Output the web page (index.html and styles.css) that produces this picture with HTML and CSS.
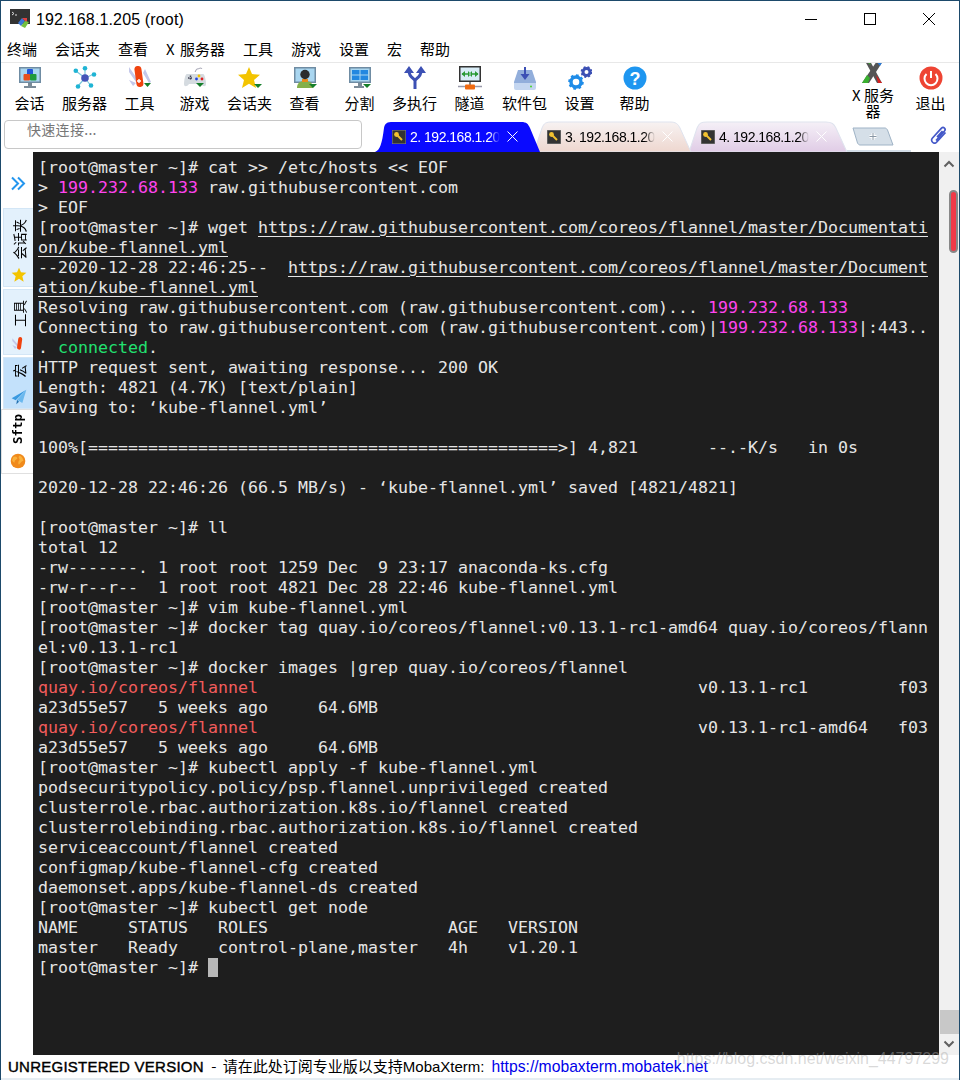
FILE: index.html
```html
<!DOCTYPE html>
<html lang="zh">
<head>
<meta charset="utf-8">
<title>192.168.1.205 (root)</title>
<link rel="stylesheet" href="styles.css">
</head>
<body>
<div class="window">
  <header class="titlebar">
    <svg class="app-icon" viewBox="0 0 20 20"><rect x="0" y="0" width="20" height="15" fill="#333"/><path d="M2 3l2 1.500-2 1.500" stroke="#ddd" fill="none"/><path d="M5 6h2" stroke="#ddd"/><path d="M8 14l4-5 3 3-4 5z" fill="#3a78d8"/><path d="M12 9l5 0 0 4-2-1z" fill="#e04040"/><path d="M11 17l4-5 4 1-4 6z" fill="#74c040"/></svg>
    <span class="title">192.168.1.205 (root)</span>
    <div class="win-controls">
      <svg class="win-btn" viewBox="0 0 12 12"><path d="M0 6.500h12" stroke="#000"/></svg>
      <svg class="win-btn" viewBox="0 0 12 12"><rect x=".5" y=".5" width="11" height="11" fill="none" stroke="#000"/></svg>
      <svg class="win-btn" viewBox="0 0 12 12"><path d="M0 0l12 12M12 0L0 12" stroke="#000"/></svg>
    </div>
  </header>
  <nav class="menubar">
    <span>终端</span><span>会话夹</span><span>查看</span><span>X 服务器</span><span>工具</span><span>游戏</span><span>设置</span><span>宏</span><span>帮助</span>
  </nav>
  <div class="toolbar">
    <div class="tool"><svg class="icon" viewBox="0 0 24 24"><rect x="1" y="1" width="22" height="16" fill="#6f8ca3"/><rect x="2.500" y="2.500" width="19" height="13" fill="#a9d6f0"/><rect x="9" y="3" width="6" height="6" rx="1" fill="#2255d8"/><rect x="5.500" y="8" width="6.500" height="6.500" rx="1" fill="#e8501c"/><rect x="12" y="8" width="6.500" height="6.500" rx="1" fill="#1e9a3c"/><path d="M10 17h4v3h-4zM6 20h12v2H6z" fill="#7b8b98"/></svg><span>会话</span></div>
    <div class="tool"><svg class="icon" viewBox="0 0 24 24"><path d="M12 12L3 5M12 12L12 3M12 12L21 8M12 12L18 20M12 12L5 20" stroke="#7fc8dc" stroke-width="1.200"/><circle cx="12" cy="12" r="3.800" fill="#4454b8"/><circle cx="2.800" cy="4.800" r="2.300" fill="#1fb4d4"/><circle cx="12" cy="2.300" r="2.300" fill="#1fb4d4"/><circle cx="21" cy="8.500" r="2.300" fill="#1fb4d4"/><circle cx="18" cy="19.500" r="2.300" fill="#1fb4d4"/><circle cx="5" cy="20.500" r="2.300" fill="#1fb4d4"/></svg><span>服务器</span></div>
    <div class="tool"><svg class="icon" viewBox="0 0 24 24"><path d="M1 1l9 13-2 2L1 6zM17 3l6 13-2 1-6-10zM1 14l7 3-3 3z" fill="#c4c8ea"/><rect x="7.500" y="0" width="7" height="21" rx="3.500" transform="rotate(-8 11 11)" fill="#f0430f"/><path d="M9 15h4M11 13v4" stroke="#fff" stroke-width="1.400"/><path d="M16 17h7l-3.500 4z" fill="#157f2a"/></svg><span>工具</span></div>
    <div class="tool"><svg class="icon" viewBox="0 0 24 24"><path d="M19 3c-1-2-3 0-5 0-1 0-1 2-2 3" stroke="#99a" fill="none"/><path d="M4 8h16c2 0 3 8 3 10 0 3-3 3-5 0H6c-2 3-5 3-5 0 0-3 1-10 3-10z" fill="#d5dbe0"/><path d="M5 12h5M7.500 9.500v5" stroke="#445" stroke-width="1.500" stroke-dasharray="1.500 1"/><circle cx="16" cy="10" r="1.400" fill="#f2c200"/><circle cx="13.500" cy="13" r="1.400" fill="#2244dd"/><circle cx="19" cy="13" r="1.400" fill="#e02020"/><path d="M13 17h8l-4 4z" fill="#157f2a"/></svg><span>游戏</span></div>
    <div class="tool"><svg class="icon" viewBox="0 0 24 24"><path d="M11 1l3 7 8 .800-6 5.200 2 8-7-4.200L4 22l2-8-6-5.200L8 8z" fill="#f3c400"/><path d="M16 18h8l-4 4z" fill="#157f2a"/></svg><span>会话夹</span></div>
    <div class="tool"><svg class="icon" viewBox="0 0 24 24"><rect x="1" y="1" width="22" height="16" fill="#6f8ca3"/><rect x="2.500" y="2.500" width="19" height="13" fill="#a9d6f0"/><path d="M4 22c0-6 4-7 8-7s8 1 8 7z" fill="#84b04a"/><rect x="9" y="13" width="6" height="3" fill="#e88a1c"/><circle cx="12" cy="8.500" r="4.700" fill="#2c2c2c"/><path d="M16 18h8l-4 4z" fill="#157f2a"/></svg><span>查看</span></div>
    <div class="tool"><svg class="icon" viewBox="0 0 24 24"><rect x="1" y="1" width="22" height="16" fill="#6f8ca3"/><rect x="2.500" y="2.500" width="19" height="13" fill="#a9d6f0"/><path d="M4 4h7.500v4.500H4zM12.500 4H20v4.500h-7.500zM4 9.500h7.500V14H4zM12.500 9.500H20V14h-7.500z" fill="#2288e0"/><path d="M10 17h4v3h-4zM6 20h10v2H6z" fill="#7b8b98"/><path d="M15 18h8l-4 4z" fill="#157f2a"/></svg><span>分割</span></div>
    <div class="tool"><svg class="icon" viewBox="0 0 24 24"><path d="M12 23v-8c0-3-6-3-6-10M12 15c0-3 6-3 6-10" stroke="#3c50b4" stroke-width="3" fill="none"/><path d="M6 0l5 7H1zM18 0l5 7H13z" fill="#3c50b4"/></svg><span>多执行</span></div>
    <div class="tool"><svg class="icon" viewBox="0 0 24 24"><rect x="1" y="0" width="22" height="16" fill="#333"/><rect x="2.500" y="1.500" width="19" height="13" fill="#d8ecf6"/><path d="M4 8h7M13 8h7" stroke="#2a9a34" stroke-width="1.500"/><path d="M7 5v6L3.500 8zM10 5v6l3-3zM14 5v6l-3-3zM17 5v6l3.500-3z" fill="#2a9a34"/><path d="M12 16v3" stroke="#888" stroke-width="2"/><path d="M0 20.500h24" stroke="#99a" stroke-width="1.500"/><rect x="7" y="18.500" width="10" height="5" rx="1" fill="#f06a10"/></svg><span>隧道</span></div>
    <div class="tool"><svg class="icon" viewBox="0 0 24 24"><path d="M5 4h14l4 12v6H1v-6z" fill="#92aedb"/><path d="M1 17h22v5a2 2 0 0 1-2 2H3a2 2 0 0 1-2-2z" fill="#c4d6f0"/><circle cx="18" cy="20.500" r="1" fill="#49d02a"/><path d="M12 1v9" stroke="#3c50b4" stroke-width="2"/><path d="M7.500 8h9L12 14z" fill="#3c50b4"/></svg><span>软件包</span></div>
    <div class="tool"><svg class="icon" viewBox="0 0 24 24"><circle cx="8" cy="16" r="5" fill="none" stroke="#1f8ce8" stroke-width="3.400"/><circle cx="8" cy="16" r="6.800" fill="none" stroke="#1f8ce8" stroke-width="2" stroke-dasharray="2.700 2.600"/><circle cx="18.500" cy="6" r="3.500" fill="none" stroke="#3c50b4" stroke-width="3"/><circle cx="18.500" cy="6" r="5" fill="none" stroke="#3c50b4" stroke-width="1.800" stroke-dasharray="2 2"/></svg><span>设置</span></div>
    <div class="tool"><svg class="icon" viewBox="0 0 24 24"><circle cx="12" cy="12" r="11.500" fill="#1e96f0"/><text x="12" y="18.500" class="help-mark" text-anchor="middle">?</text></svg><span>帮助</span></div>
    <div class="tool tool-x"><svg class="icon-x" viewBox="0 0 22 22"><path d="M3 0h5l12 22h-5z" fill="#555"/><path d="M15 0h6L7 22H0z" fill="#555"/><path d="M14 0h7l-3 5z" fill="#2a7ad8"/><path d="M0 22l5-8 3 3-2 5z" fill="#3ab030"/><path d="M14 14l6 8h-4z" fill="#d82020"/><path d="M3 0h4l2 4z" fill="#3ab030"/></svg><span>X 服务器</span></div>
    <div class="tool"><svg class="icon" viewBox="0 0 24 24"><circle cx="12" cy="12" r="11.500" fill="#ee4433"/><path d="M7.500 8a6.500 6.500 0 1 0 9 0" stroke="#fff" stroke-width="2" fill="none"/><path d="M12 5v7" stroke="#fff" stroke-width="2"/></svg><span>退出</span></div>
  </div>
  <div class="tabrow">
    <div class="quick">快速连接...</div>
    <div class="tabs">
      <div class="tab tab-active">
        <svg class="tab-shape" viewBox="0 0 166 32" preserveAspectRatio="none"><path d="M0 32C5 30 7 24 9 8 10 3 12 2 18 2h128c6 0 7 2 9 6l10 24z" fill="#0a0aff"/></svg>
        <svg class="key" viewBox="0 0 14 14"><rect width="14" height="14" fill="#333" stroke="#888"/><path d="M4 4l6 6" stroke="#f2c230" stroke-width="2"/><circle cx="4.500" cy="4.500" r="2.400" fill="#f2c230"/></svg>
        <span class="tab-text">2. 192.168.1.205</span>
        <svg class="tab-x" viewBox="0 0 11 11"><path d="M.5.5l10 10M10.500.5l-10 10" stroke="#fff"/></svg>
      </div>
      <div class="tab tab-peach">
        <svg class="tab-shape" viewBox="0 0 158 32" preserveAspectRatio="none"><path d="M0 32L8 8C10 3 12 2 18 2h118c6 0 8 2 10 6l11 24z" fill="url(#peach)" stroke="#dfe3ee"/><defs><linearGradient id="peach" x1="0" y1="0" x2="0" y2="1"><stop offset="0" stop-color="#f7f2f2"/><stop offset="1" stop-color="#eed7cf"/></linearGradient></defs></svg>
        <svg class="key" viewBox="0 0 14 14"><rect width="14" height="14" fill="#333" stroke="#888"/><path d="M4 4l6 6" stroke="#f2c230" stroke-width="2"/><circle cx="4.500" cy="4.500" r="2.400" fill="#f2c230"/></svg>
        <span class="tab-text">3. 192.168.1.205</span>
        <svg class="tab-x" viewBox="0 0 11 11"><path d="M.5.5l10 10M10.500.5l-10 10" stroke="#fff"/></svg>
      </div>
      <div class="tab tab-violet">
        <svg class="tab-shape" viewBox="0 0 158 32" preserveAspectRatio="none"><path d="M0 32L8 8C10 3 12 2 18 2h118c6 0 8 2 10 6l11 24z" fill="url(#violet)" stroke="#dfe3ee"/><defs><linearGradient id="violet" x1="0" y1="0" x2="0" y2="1"><stop offset="0" stop-color="#f5f0f7"/><stop offset="1" stop-color="#e0cce6"/></linearGradient></defs></svg>
        <svg class="key" viewBox="0 0 14 14"><rect width="14" height="14" fill="#333" stroke="#888"/><path d="M4 4l6 6" stroke="#f2c230" stroke-width="2"/><circle cx="4.500" cy="4.500" r="2.400" fill="#f2c230"/></svg>
        <span class="tab-text">4. 192.168.1.205</span>
        <svg class="tab-x" viewBox="0 0 11 11"><path d="M.5.5l10 10M10.500.5l-10 10" stroke="#fff"/></svg>
      </div>
      <div class="add-wrap">
        <svg class="add-tab" viewBox="0 0 42 19"><path d="M1 1h32c1 0 2 1 2.500 2L41 18H8c-1 0-2-1-2.500-2z" fill="#d5dfe8" stroke="#9fb3c6"/><path d="M21 6v7M17.500 9.500h7" stroke="#fff" stroke-width="3"/><path d="M21 6v7M17.500 9.500h7" stroke="#8a98a6" stroke-width="1" fill="none"/></svg>
      </div>
    </div>
    <svg class="clip" viewBox="0 0 18 18"><path d="M6 14.500L14.500 5c1.800-2-1-4.800-3-2.800L2.500 12c-2.800 3 1.500 7 4.300 4l8.700-9.500M7 11l5.500-6" fill="none" stroke="#4458c8" stroke-width="1.700"/></svg>
  </div>
  <main class="main">
    <aside class="rail">
      <div class="rail-top"><svg class="chevrons" viewBox="0 0 16 16"><path d="M2 2l6 6-6 6M8 2l6 6-6 6" fill="none" stroke="#2496ee" stroke-width="2"/></svg></div>
      <div class="side-tab st-1"><span class="side-label">会话夹</span><svg class="side-icon" viewBox="0 0 24 24"><path d="M12 1l3 7 8 .800-6 5.200 2 8-7-4.200L5 22l2-8-6-5.200L9 8z" fill="#f3c400"/></svg></div>
      <div class="side-tab st-2"><span class="side-label">工具</span><svg class="side-icon" viewBox="0 0 24 24"><path d="M2 5l9 10-2 2L2 9zM2 15l7 3-3 3z" fill="#c4c8ea"/><rect x="10" y="3" width="6" height="19" rx="3" transform="rotate(8 13 12)" fill="#f0430f"/></svg></div>
      <div class="side-tab st-3"><span class="side-label">宏</span><svg class="side-icon" viewBox="0 0 24 24"><path d="M23 1L1 14l6 3z" fill="#3a9ae0"/><path d="M23 1L9 16l8 5z" fill="#6ab8ee"/><path d="M9 16l-1 7 4-4z" fill="#2070b0"/></svg></div>
      <div class="side-tab st-4"><span class="side-label sftp">Sftp</span><svg class="side-icon" viewBox="0 0 24 24"><circle cx="12" cy="12" r="11" fill="#f08a1c"/><path d="M5 6c3-2 6 0 6 2s-4 2-4 5-3 0-4-2M14 4c3 0 6 4 6 8-3 0-4 3-6 5s-2-5 0-6-3-4 0-7z" fill="#f9b13c"/></svg></div>
    </aside>
    <pre class="terminal">[root@master ~]# cat &gt;&gt; /etc/hosts &lt;&lt; EOF
&gt; <span class="pink">199.232.68.133</span> raw.githubusercontent.com
&gt; EOF
[root@master ~]# wget <span class="ul">https://raw.githubusercontent.com/coreos/flannel/master/Documentati</span>
<span class="ul">on/kube-flannel.yml</span>
--2020-12-28 22:46:25--  <span class="ul">https://raw.githubusercontent.com/coreos/flannel/master/Document</span>
<span class="ul">ation/kube-flannel.yml</span>
Resolving raw.githubusercontent.com (raw.githubusercontent.com)... <span class="pink">199.232.68.133</span>
Connecting to raw.githubusercontent.com (raw.githubusercontent.com)|<span class="pink">199.232.68.133</span>|:443..
. <span class="green">connected</span>.
HTTP request sent, awaiting response... 200 OK
Length: 4821 (4.7K) [text/plain]
Saving to: ‘kube-flannel.yml’

100%[===============================================&gt;] 4,821       --.-K/s   in 0s

2020-12-28 22:46:26 (66.5 MB/s) - ‘kube-flannel.yml’ saved [4821/4821]

[root@master ~]# ll
total 12
-rw-------. 1 root root 1259 Dec  9 23:17 anaconda-ks.cfg
-rw-r--r--  1 root root 4821 Dec 28 22:46 kube-flannel.yml
[root@master ~]# vim kube-flannel.yml
[root@master ~]# docker tag quay.io/coreos/flannel:v0.13.1-rc1-amd64 quay.io/coreos/flann
el:v0.13.1-rc1
[root@master ~]# docker images |grep quay.io/coreos/flannel
<span class="red">quay.io/coreos/flannel</span>                                            v0.13.1-rc1         f03
a23d55e57   5 weeks ago     64.6MB
<span class="red">quay.io/coreos/flannel</span>                                            v0.13.1-rc1-amd64   f03
a23d55e57   5 weeks ago     64.6MB
[root@master ~]# kubectl apply -f kube-flannel.yml
podsecuritypolicy.policy/psp.flannel.unprivileged created
clusterrole.rbac.authorization.k8s.io/flannel created
clusterrolebinding.rbac.authorization.k8s.io/flannel created
serviceaccount/flannel created
configmap/kube-flannel-cfg created
daemonset.apps/kube-flannel-ds created
[root@master ~]# kubectl get node
NAME     STATUS   ROLES                  AGE   VERSION
master   Ready    control-plane,master   4h    v1.20.1
[root@master ~]# <span class="cursor"> </span></pre>
    <div class="scrollbar">
      <svg class="sb-arrow" viewBox="0 0 12 8"><path d="M1.500 6.500L6 2l4.500 4.500" fill="none" stroke="#606060" stroke-width="2"/></svg>
      <div class="sb-red"></div>
      <div class="sb-space"></div>
      <div class="sb-thumb"></div>
      <svg class="sb-arrow sb-down" viewBox="0 0 12 8"><path d="M1.500 1.500L6 6l4.500-4.500" fill="none" stroke="#606060" stroke-width="2"/></svg>
    </div>
  </main>
  <footer class="status">
    <span class="unreg">UNREGISTERED VERSION</span><span class="sub">&nbsp;-&nbsp;<span class="cjk">请在此处订阅专业版以支持</span><span class="latin">MobaXterm:</span></span><span class="link">https://mobaxterm.mobatek.net</span>
  </footer>
  <div class="bottom-strip"></div>
  <div class="watermark">https://blog.csdn.net/weixin_44797299</div>
</div>
</body>
</html>
```
FILE: styles.css
```css
* { box-sizing: border-box; }
html, body { margin: 0; padding: 0; background: #fff; }
.window {
  position: relative;
  width: 960px;
  height: 1080px;
  overflow: hidden;
  display: flex;
  flex-direction: column;
  border: solid #1d4a6b;
  border-width: 1px 1px 0 1px;
  background: #fff;
  color: #000;
  font-family: "Noto Sans CJK SC", "Liberation Sans", sans-serif;
}
.titlebar { height: 34px; display: flex; align-items: center; padding-left: 9px; flex: none; }
.app-icon { width: 20px; height: 20px; flex: none; margin-top: 2px; }
.title { margin: 4px 0 0 6px; font: 16px/20px "Liberation Sans", sans-serif; letter-spacing: 0.150px; }
.win-controls { margin-left: auto; display: flex; gap: 47px; padding-right: 24px; margin-top: 2px; }
.win-btn { width: 12px; height: 12px; display: block; }
.menubar {
  height: 28px; flex: none; display: flex; gap: 18px; padding: 0 0 0 6px; align-items: center;
  font-size: 15px; line-height: 20px; border-bottom: 1px solid #e8e8e8; word-spacing: 2px;
}
.toolbar { height: 57px; flex: none; display: flex; overflow: hidden; padding-left: 1px; }
.tool { width: 55px; flex: none; display: flex; flex-direction: column; align-items: center; padding-top: 3px; font-size: 15px; line-height: 20px; }
.icon { width: 24px; height: 24px; flex: none; margin-bottom: 3px; display: block; }
.help-mark { font: bold 18px "Liberation Sans", sans-serif; fill: #fff; }
.tool-x { margin-left: auto; padding: 0; width: 50px; margin-right: 5px; text-align: center; line-height: 16px; }
.icon-x { width: 22px; height: 22px; flex: none; margin-top: -2px; margin-bottom: 4px; display: block; }
.tool:last-child { margin-right: 1px; }
.tabrow { height: 32px; flex: none; display: flex; align-items: flex-start; }
.quick {
  width: 358px; height: 29px; margin-left: 3px; border: 1px solid #c8c8c8; border-radius: 4px; flex: none;
  padding-left: 22px; font-size: 14px; line-height: 16px; color: #777; letter-spacing: 0.300px;
}
.tabs { display: flex; margin-left: 13px; flex: none; height: 32px; }
.tab { position: relative; height: 32px; width: 166px; flex: none; display: flex; align-items: center; padding: 2px 0 0 17px; font: 14px/20px "Liberation Sans", sans-serif; letter-spacing: -0.500px; }
.tab-peach { color: #000; z-index: 1; width: 158px; margin-left: -7px; padding-left: 13px; }
.tab-violet { width: 159px; margin-left: -3px; padding-left: 12px; }
.tab-shape { position: absolute; left: 0; top: 0; width: 100%; height: 100%; }
.key { position: relative; width: 14px; height: 14px; flex: none; }
.tab-text { position: relative; margin-left: 4px; width: 90px; overflow: hidden; white-space: nowrap; flex: none; -webkit-mask-image: linear-gradient(90deg, #000 88%, transparent); mask-image: linear-gradient(90deg, #000 88%, transparent); }
.tab-active { color: #fff; z-index: 2; }
.tab-x { position: relative; margin: 0 0 2px 7px; width: 11px; height: 11px; flex: none; }
.add-wrap { width: 64px; height: 32px; flex: none; margin-left: -1px; border-bottom: 2px solid #d3dde6; padding: 7px 0 0 5px; }
.add-tab { width: 42px; height: 19px; display: block; }
.clip { width: 18px; height: 18px; margin: 6px 0 0 19px; flex: none; }
.main { height: 903px; flex: none; display: flex; }
.rail { width: 32px; flex: none; display: flex; flex-direction: column; padding-left: 2px; }
.rail-top { height: 56px; flex: none; display: flex; justify-content: center; padding-top: 23px; }
.chevrons { width: 16px; height: 17px; }
.side-tab { display: flex; flex-direction: column; align-items: center; justify-content: space-between; flex: none; padding: 10px 0 3px 0; margin-bottom: 2px; background: #e3f1fc; border: 1px solid #d3e6f6; border-right: 0; }
.st-1 { height: 79px; }
.st-2 { height: 66px; }
.st-3 { height: 52px; background: #c3e1fb; margin-bottom: 0; padding: 6px 0 3px; }
.st-4 { height: 65px; background: #fff; border: 1px solid #e0e0e0; border-right: 0; margin-left: -2px; padding: 4px 0 4px 0; }
.side-label { writing-mode: vertical-rl; text-orientation: sideways; transform: rotate(180deg); font-size: 13.500px; line-height: 14px; }
.sftp { font: bold 12.500px/14px "DejaVu Sans Mono", monospace; }
.side-icon { width: 16px; height: 16px; flex: none; }
.terminal {
  width: 906px; flex: none; margin: 0; padding: 6px 0 0 5px; background: #1e1e1e; color: #e6e6e6;
  font: 16.610px/20px "DejaVu Sans Mono", "Liberation Mono", monospace; overflow: hidden; white-space: pre;
}
.pink { color: #ff44ee; }
.green { color: #22e070; }
.red { color: #f25c5c; }
.ul { text-decoration: underline; text-underline-offset: 3px; }
.cursor { background: #b8b8b8; }
.scrollbar { flex: 1; background: #f0f0f0; display: flex; flex-direction: column; align-items: center; }
.sb-arrow { width: 12px; height: 8px; margin: 8px 0; flex: none; }
.sb-down { margin: 6px 0 7px; }
.sb-red { width: 9px; height: 63px; margin: 14px 0 0 9px; background: #f03a48; border: 2px solid #888; border-radius: 5px; flex: none; }
.sb-space { flex: 1; }
.sb-thumb { width: 19px; height: 24px; background: #c8c8c8; flex: none; }
.status { height: 23px; flex: none; display: flex; align-items: center; padding-left: 7px; font-size: 15px; line-height: 20px; white-space: nowrap; }
.unreg { font: 15px/20px "Liberation Sans", sans-serif; -webkit-text-stroke: 0.4px #000; letter-spacing: 0.250px; }
.sub { margin-left: 4px; }
.cjk { margin-left: 3px; }
.latin { font-family: "Liberation Sans", sans-serif; }
.link { color: #0000e8; margin-left: 7px; font: 15.700px/20px "Liberation Sans", sans-serif; }
.bottom-strip { height: 2px; flex: none; background: #e6edf2; }
.watermark { position: absolute; right: 10px; bottom: 9px; font: 16px/24px "Liberation Sans", sans-serif; color: rgba(170,170,170,0.45); }
```
